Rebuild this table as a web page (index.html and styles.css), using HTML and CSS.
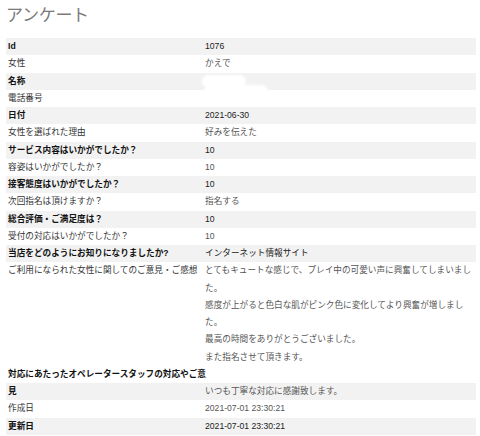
FILE: index.html
```html
<!DOCTYPE html>
<html lang="ja">
<head>
<meta charset="utf-8">
<title>アンケート</title>
<link rel="stylesheet" href="styles.css">
</head>
<body>
<div class="page">
  <h1 class="title">アンケート</h1>
  <div class="table">
    <div class="row strong"><div class="label">Id</div><div class="value">1076</div></div>
    <div class="row"><div class="label">女性</div><div class="value">かえで</div></div>
    <div class="row strong"><div class="label">名称</div><div class="value"><span class="blur blur-a"></span></div></div>
    <div class="row"><div class="label">電話番号</div><div class="value"><span class="blur blur-b"></span></div></div>
    <div class="row strong"><div class="label">日付</div><div class="value">2021-06-30</div></div>
    <div class="row"><div class="label">女性を選ばれた理由</div><div class="value">好みを伝えた</div></div>
    <div class="row strong"><div class="label">サービス内容はいかがでしたか？</div><div class="value">10</div></div>
    <div class="row"><div class="label">容姿はいかがでしたか？</div><div class="value">10</div></div>
    <div class="row strong"><div class="label">接客態度はいかがでしたか？</div><div class="value">10</div></div>
    <div class="row"><div class="label">次回指名は頂けますか？</div><div class="value">指名する</div></div>
    <div class="row strong"><div class="label">総合評価・ご満足度は？</div><div class="value">10</div></div>
    <div class="row"><div class="label">受付の対応はいかがでしたか？</div><div class="value">10</div></div>
    <div class="row strong"><div class="label">当店をどのようにお知りになりましたか?</div><div class="value">インターネット情報サイト</div></div>
    <div class="row"><div class="label">ご利用になられた女性に関してのご意見・ご感想</div><div class="value">とてもキュートな感じで、プレイ中の可愛い声に興奮してしまいました。<br>感度が上がると色白な肌がピンク色に変化してより興奮が増しました。<br>最高の時間をありがとうございました。<br>また指名させて頂きます。</div></div>
    <div class="row strong split"><div class="label wide">対応にあたったオペレータースタッフの対応やご意見</div><div class="value lower">いつも丁寧な対応に感謝致します。</div></div>
    <div class="row"><div class="label">作成日</div><div class="value">2021-07-01 23:30:21</div></div>
    <div class="row strong"><div class="label">更新日</div><div class="value">2021-07-01 23:30:21</div></div>
  </div>
</div>
</body>
</html>
```
FILE: styles.css
```css
html, body {
  margin: 0;
  padding: 0;
  background: #ffffff;
}

body {
  font-family: "Liberation Sans", "Noto Sans CJK JP", sans-serif;
}

.page {
  width: 470px;
  padding: 4px 0 0 6px;
}

.title {
  margin: 0;
  height: 34px;
  font-size: 17px;
  line-height: 24px;
  font-weight: normal;
  color: #7a7a7a;
  letter-spacing: -0.3px;
}

.table {
  font-size: 8.64px;
  line-height: 17.25px;
  color: #555555;
}

.row {
  display: grid;
  grid-template-columns: 197px 1fr;
}

.row .label {
  color: #333333;
}

.row.strong {
  background: #f2f2f2;
}

.row.strong .label {
  color: #111111;
  font-weight: bold;
}

.row.strong .value {
  color: #222222;
}

.row.split {
  background: linear-gradient(to bottom, #ffffff 17.25px, #f2f2f2 17.25px);
}

.label {
  padding-left: 2px;
}

.label.wide {
  width: 199px;
  position: relative;
  z-index: 1;
}

.value {
  padding-left: 2px;
}

.row.strong .value.lower {
  padding-top: 17.25px;
  color: #555555;
}

.blur {
  display: inline-block;
  height: 11px;
  border-radius: 6px;
  background: #ffffff;
  vertical-align: middle;
  box-shadow: 0 0 3px 1px rgba(255,255,255,0.9);
}

.blur-a {
  width: 42px;
  margin-left: -2px;
}

.blur-b {
  width: 62px;
  margin-top: -14px;
}
```
